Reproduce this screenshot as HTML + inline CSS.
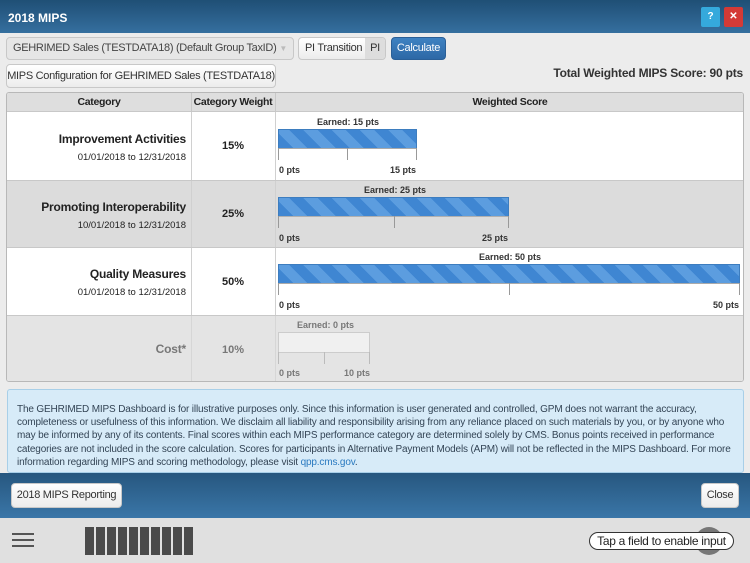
<!DOCTYPE html>
<html><head><meta charset="utf-8"><style>
*{margin:0;padding:0;box-sizing:border-box}
body{width:750px;height:563px;overflow:hidden;font-family:"Liberation Sans",sans-serif;background:#ececec;position:relative;color:#222}
.abs{position:absolute}
.hdr{left:0;top:0;width:750px;height:33px;background:linear-gradient(#1f4f75,#356f9f);color:#fff;font-weight:bold;font-size:12px;padding:11px 8px}
.btn{position:absolute;background:linear-gradient(#fff,#ececec);border:1px solid #c8c8c8;border-radius:4px;font-size:11px;color:#333;text-align:center;white-space:nowrap;letter-spacing:-0.3px;overflow:hidden}
.tbl{left:6px;top:92px;width:738px;height:290px;border:1px solid #b8b8b8;border-radius:3px;overflow:hidden;background:#fff}
.th{top:0;height:19px;background:#dedede;border-bottom:1px solid #c8c8c8;font-size:10.5px;font-weight:bold;text-align:center;line-height:19px;white-space:nowrap;letter-spacing:-0.3px}
.row{left:0;width:738px}
.cat{position:absolute;left:0;width:184px;text-align:right;padding-right:5px;white-space:nowrap}
.cat b{font-size:12px;display:block;line-height:15px;letter-spacing:-0.2px}
.cat span{font-size:9.5px;line-height:12px}
.wt{position:absolute;left:184px;width:84px;text-align:center;font-size:11px;font-weight:bold}
.vl{position:absolute;top:0;bottom:0;width:1px;background:#d0d0d0}
.bar{position:absolute;height:20px;border:1px solid #3d7dbf;background:repeating-linear-gradient(45deg,#3f86d2 0 10px,#5c9ddf 10px 20px)}
.tick{position:absolute;width:1px;background:#999}
.axis{position:absolute;height:1px;background:#aaa}
.lbl{position:absolute;font-size:9px;font-weight:bold;color:#333;white-space:nowrap}
.info{left:7px;top:389px;width:737px;height:84px;background:#d7ebf8;border:1px solid #a8cfe8;border-radius:3px;font-size:10px;color:#345;line-height:13.2px;padding:13px 9px 0 9px;letter-spacing:-0.15px}
.foot{left:0;top:473px;width:750px;height:45px;background:linear-gradient(#27577f,#3a76a8)}
.tb{left:0;top:518px;width:750px;height:45px;background:#e0e0e0}
</style></head><body>
<div class="abs hdr">2018 MIPS</div>
<div class="abs" style="left:701px;top:7px;width:19px;height:20px;background:#35a9dc;border-radius:2px;color:#fff;font-size:10px;font-weight:bold;text-align:center;line-height:20px">?</div>
<div class="abs" style="left:724px;top:7px;width:19px;height:20px;background:#d43a36;border-radius:2px;color:#fff;font-size:10px;font-weight:bold;text-align:center;line-height:20px">✕</div>

<div class="btn" style="left:6px;top:37px;width:288px;height:23px;line-height:21px;text-align:left;padding-left:6px;background:#e6e6e6;color:#444">GEHRIMED Sales (TESTDATA18) (Default Group TaxID)<span style="position:absolute;right:6px;color:#bbb;font-size:8px">▼</span></div>
<div class="btn" style="left:298px;top:37px;width:88px;height:23px;line-height:21px;text-align:left;padding-left:6px">PI Transition<span style="position:absolute;right:0;top:0;width:20px;height:21px;background:#ddd;text-align:center">PI</span></div>
<div class="btn" style="left:391px;top:37px;width:55px;height:23px;line-height:21px;background:linear-gradient(#3e82c2,#2d68a6);border-color:#2a5f97;color:#fff">Calculate</div>
<div class="btn" style="left:6px;top:64px;width:270px;height:24px;line-height:22px">MIPS Configuration for GEHRIMED Sales (TESTDATA18)</div>
<div class="abs" style="right:7px;top:66px;font-size:12px;font-weight:bold;color:#333;letter-spacing:-0.2px">Total Weighted MIPS Score: 90 pts</div>

<div class="abs tbl">
 <div class="abs th" style="left:0;width:184px">Category</div>
 <div class="abs th" style="left:184px;width:84px">Category Weight</div>
 <div class="abs th" style="left:268px;width:470px">Weighted Score</div>
 <div class="abs" style="left:184px;top:0;width:1px;height:19px;background:#c8c8c8"></div>
 <div class="abs" style="left:268px;top:0;width:1px;height:19px;background:#c8c8c8"></div>

 <div class="abs row" style="top:19px;height:68px;background:#fff">
  <div class="cat" style="top:20px"><b>Improvement Activities</b><span>01/01/2018 to 12/31/2018</span></div>
  <div class="wt" style="top:28px">15%</div>
  <div class="vl" style="left:184px"></div><div class="vl" style="left:268px"></div>
  <div class="lbl" style="left:310px;top:5px">Earned: 15 pts</div>
  <div class="bar" style="left:271px;top:17px;width:139px"></div>
  <div class="axis" style="left:271px;top:36px;width:139px"></div>
  <div class="tick" style="left:271px;top:36px;height:12px"></div><div class="tick" style="left:340px;top:36px;height:12px"></div><div class="tick" style="left:409px;top:36px;height:12px"></div>
  <div class="lbl" style="left:272px;top:53px">0 pts</div><div class="lbl" style="left:383px;top:53px">15 pts</div>
 </div>

 <div class="abs row" style="top:87px;height:67px;background:#dcdcdc;border-top:1px solid #c8c8c8">
  <div class="cat" style="top:19px"><b>Promoting Interoperability</b><span>10/01/2018 to 12/31/2018</span></div>
  <div class="wt" style="top:27px">25%</div>
  <div class="vl" style="left:184px"></div><div class="vl" style="left:268px"></div>
  <div class="lbl" style="left:357px;top:4px">Earned: 25 pts</div>
  <div class="bar" style="left:271px;top:16px;width:231px"></div>
  <div class="axis" style="left:271px;top:35px;width:231px;background:#b0b0b0"></div>
  <div class="tick" style="left:271px;top:35px;height:12px"></div><div class="tick" style="left:387px;top:35px;height:12px"></div><div class="tick" style="left:501px;top:35px;height:12px"></div>
  <div class="lbl" style="left:272px;top:52px">0 pts</div><div class="lbl" style="left:475px;top:52px">25 pts</div>
 </div>

 <div class="abs row" style="top:154px;height:68px;background:#fff;border-top:1px solid #c8c8c8">
  <div class="cat" style="top:19px"><b>Quality Measures</b><span>01/01/2018 to 12/31/2018</span></div>
  <div class="wt" style="top:28px">50%</div>
  <div class="vl" style="left:184px"></div><div class="vl" style="left:268px"></div>
  <div class="lbl" style="left:472px;top:4px">Earned: 50 pts</div>
  <div class="bar" style="left:271px;top:16px;width:462px"></div>
  <div class="axis" style="left:271px;top:35px;width:462px"></div>
  <div class="tick" style="left:271px;top:35px;height:12px"></div><div class="tick" style="left:502px;top:35px;height:12px"></div><div class="tick" style="left:732px;top:35px;height:12px"></div>
  <div class="lbl" style="left:272px;top:52px">0 pts</div><div class="lbl" style="left:706px;top:52px">50 pts</div>
 </div>

 <div class="abs row" style="top:222px;height:68px;background:#e4e4e4;border-top:1px solid #c8c8c8">
  <div class="cat" style="top:26px"><b style="color:#777">Cost*</b></div>
  <div class="wt" style="top:28px;color:#777">10%</div>
  <div class="vl" style="left:184px;background:#d6d6d6"></div><div class="vl" style="left:268px;background:#d6d6d6"></div>
  <div class="lbl" style="left:290px;top:4px;color:#777">Earned: 0 pts</div>
  <div class="abs" style="left:271px;top:16px;width:92px;height:21px;background:#f0f0f0;border:1px solid #ccc"></div>
  <div class="tick" style="left:271px;top:36px;height:12px;background:#bbb"></div><div class="tick" style="left:317px;top:36px;height:12px;background:#bbb"></div><div class="tick" style="left:362px;top:36px;height:12px;background:#bbb"></div>
  <div class="lbl" style="left:272px;top:52px;color:#777">0 pts</div><div class="lbl" style="left:337px;top:52px;color:#777">10 pts</div>
 </div>
</div>

<div class="abs info">The GEHRIMED MIPS Dashboard is for illustrative purposes only. Since this information is user generated and controlled, GPM does not warrant the accuracy, completeness or usefulness of this information. We disclaim all liability and responsibility arising from any reliance placed on such materials by you, or by anyone who may be informed by any of its contents. Final scores within each MIPS performance category are determined solely by CMS. Bonus points received in performance categories are not included in the score calculation. Scores for participants in Alternative Payment Models (APM) will not be reflected in the MIPS Dashboard. For more information regarding MIPS and scoring methodology, please visit <span style="color:#2a7ac0">qpp.cms.gov</span>.</div>

<div class="abs foot"></div>
<div class="btn" style="left:11px;top:483px;width:111px;height:25px;line-height:23px">2018 MIPS Reporting</div>
<div class="btn" style="left:701px;top:483px;width:38px;height:25px;line-height:23px">Close</div>

<div class="abs tb"></div>
<div class="abs" style="left:12px;top:533px;width:22px;height:2px;background:#555;box-shadow:0 6px 0 #555,0 12px 0 #555"></div>
<div class="abs" style="left:85px;top:527px;width:108px;height:28px;background:repeating-linear-gradient(90deg,#4a4a4a 0 9px,#e0e0e0 9px 11px)"></div>
<div class="abs" style="left:695px;top:527px;width:28px;height:28px;border-radius:50%;background:#777"></div>
<div class="abs" style="left:589px;top:532px;width:145px;height:18px;border:1px solid #333;border-radius:9px;background:#fff;font-size:12px;text-align:center;line-height:16px;color:#222;white-space:nowrap;letter-spacing:-0.3px">Tap a field to enable input</div>
</body></html>
